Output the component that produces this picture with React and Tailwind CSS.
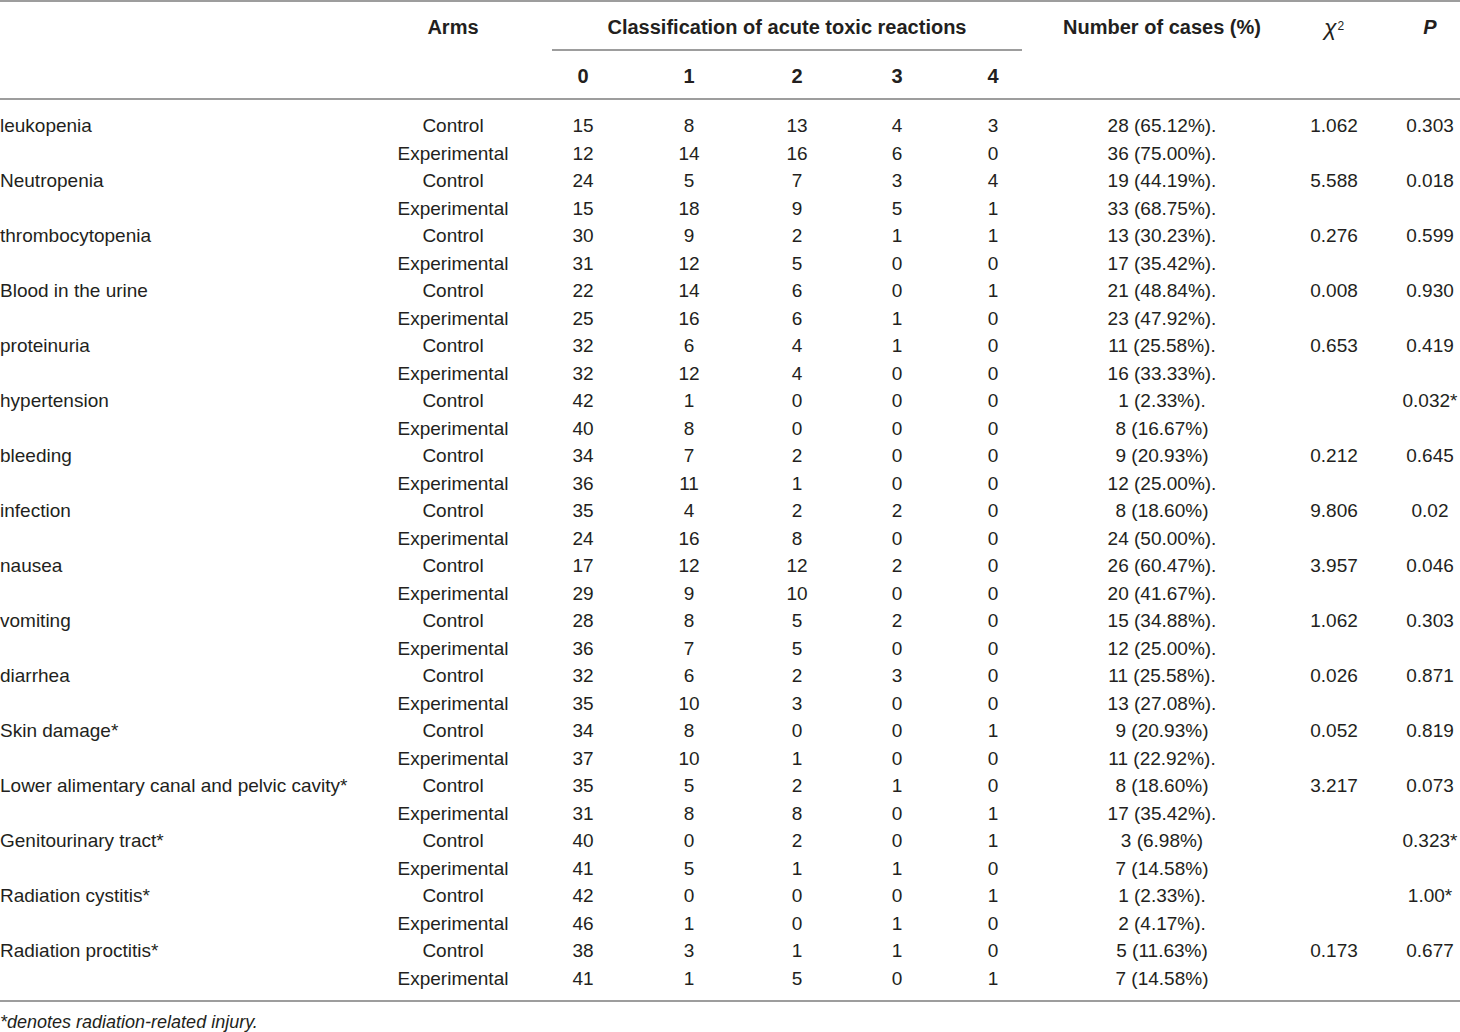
import React from "react";

const rows = [
  ["leukopenia", [15, 8, 13, 4, 3], "28 (65.12%).", [12, 14, 16, 6, 0], "36 (75.00%).", "1.062", "0.303"],
  ["Neutropenia", [24, 5, 7, 3, 4], "19 (44.19%).", [15, 18, 9, 5, 1], "33 (68.75%).", "5.588", "0.018"],
  ["thrombocytopenia", [30, 9, 2, 1, 1], "13 (30.23%).", [31, 12, 5, 0, 0], "17 (35.42%).", "0.276", "0.599"],
  ["Blood in the urine", [22, 14, 6, 0, 1], "21 (48.84%).", [25, 16, 6, 1, 0], "23 (47.92%).", "0.008", "0.930"],
  ["proteinuria", [32, 6, 4, 1, 0], "11 (25.58%).", [32, 12, 4, 0, 0], "16 (33.33%).", "0.653", "0.419"],
  ["hypertension", [42, 1, 0, 0, 0], "1 (2.33%).", [40, 8, 0, 0, 0], "8 (16.67%)", "", "0.032*"],
  ["bleeding", [34, 7, 2, 0, 0], "9 (20.93%)", [36, 11, 1, 0, 0], "12 (25.00%).", "0.212", "0.645"],
  ["infection", [35, 4, 2, 2, 0], "8 (18.60%)", [24, 16, 8, 0, 0], "24 (50.00%).", "9.806", "0.02"],
  ["nausea", [17, 12, 12, 2, 0], "26 (60.47%).", [29, 9, 10, 0, 0], "20 (41.67%).", "3.957", "0.046"],
  ["vomiting", [28, 8, 5, 2, 0], "15 (34.88%).", [36, 7, 5, 0, 0], "12 (25.00%).", "1.062", "0.303"],
  ["diarrhea", [32, 6, 2, 3, 0], "11 (25.58%).", [35, 10, 3, 0, 0], "13 (27.08%).", "0.026", "0.871"],
  ["Skin damage*", [34, 8, 0, 0, 1], "9 (20.93%)", [37, 10, 1, 0, 0], "11 (22.92%).", "0.052", "0.819"],
  ["Lower alimentary canal and pelvic cavity*", [35, 5, 2, 1, 0], "8 (18.60%)", [31, 8, 8, 0, 1], "17 (35.42%).", "3.217", "0.073"],
  ["Genitourinary tract*", [40, 0, 2, 0, 1], "3 (6.98%)", [41, 5, 1, 1, 0], "7 (14.58%)", "", "0.323*"],
  ["Radiation cystitis*", [42, 0, 0, 0, 1], "1 (2.33%).", [46, 1, 0, 1, 0], "2 (4.17%).", "", "1.00*"],
  ["Radiation proctitis*", [38, 3, 1, 1, 0], "5 (11.63%)", [41, 1, 5, 0, 1], "7 (14.58%)", "0.173", "0.677"],
];

const cols = "grid grid-cols-[388px_130px_130px_82px_134px_66px_126px_212px_132px_60px]";

function Row({ label, arm, counts, cases, chi, p }) {
  return (
    <div className={`${cols} h-[27.5px] items-center`}>
      <div className="whitespace-nowrap">{label}</div>
      <div className="text-center">{arm}</div>
      {counts.map((c, i) => (
        <div key={i} className="text-center">{c}</div>
      ))}
      <div className="text-center">{cases}</div>
      <div className="text-center">{chi}</div>
      <div className="text-center">{p}</div>
    </div>
  );
}

export default function App() {
  return (
    <div className="w-[1460px] h-[1032px] bg-white text-[#231f20] text-[19px] leading-none font-['Liberation_Sans',Arial,sans-serif] overflow-hidden">
      {/* header */}
      <div className="border-t-2 border-[#9d9d9d] text-[20px]">
        <div className={`${cols} h-[49px] font-bold`}>
          <div />
          <div className="text-center pt-[15px]">Arms</div>
          <div className="col-span-5 mx-[34px] border-b-2 border-[#9d9d9d] text-center pt-[15px] whitespace-nowrap">
            Classification of acute toxic reactions
          </div>
          <div className="text-center pt-[15px] whitespace-nowrap">Number of cases (%)</div>
          <div className="text-center pt-[14px] font-normal">
            <span className="text-[23px] italic">χ</span>
            <sup className="text-[12px] relative -top-[5px] ml-[1px]">2</sup>
          </div>
          <div className="text-center pt-[15px] italic">P</div>
        </div>
        <div className={`${cols} h-[49px] font-bold border-b-2 border-[#9d9d9d] pt-[15px]`}>
          <div />
          <div />
          <div className="text-center">0</div>
          <div className="text-center">1</div>
          <div className="text-center">2</div>
          <div className="text-center">3</div>
          <div className="text-center">4</div>
          <div />
          <div />
          <div />
        </div>
      </div>

      {/* body */}
      <div className="pt-[12px] pb-[8px] border-b-2 border-[#9d9d9d]">
        {rows.map(([label, cc, ccase, ec, ecase, chi, p]) => (
          <React.Fragment key={label}>
            <Row label={label} arm="Control" counts={cc} cases={ccase} chi={chi} p={p} />
            <Row label="" arm="Experimental" counts={ec} cases={ecase} chi="" p="" />
          </React.Fragment>
        ))}
      </div>

      <div className="pt-[10px] leading-[20px] text-[18px] italic">*denotes radiation-related injury.</div>
    </div>
  );
}
